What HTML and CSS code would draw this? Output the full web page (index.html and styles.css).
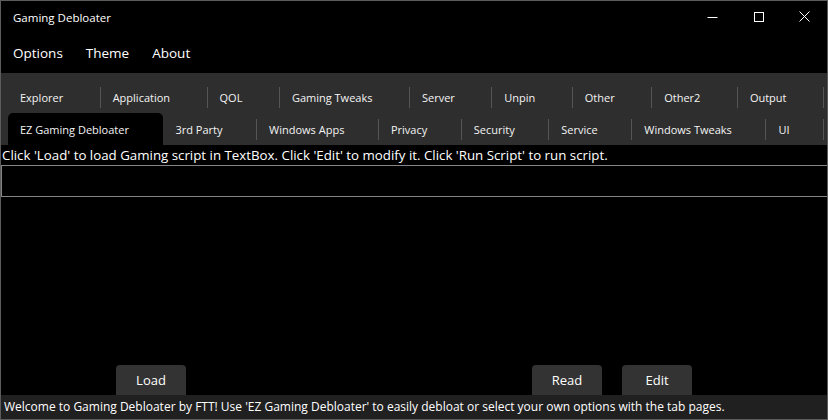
FILE: index.html
```html
<!DOCTYPE html>
<html lang="en">

<head>
  <meta charset="UTF-8">
  <title>Gaming Debloater</title>
  <link rel="stylesheet" href="styles.css">
</head>

<body>
  <div class="window">
    <div class="titlebar">
      <span class="title">Gaming Debloater</span>
      <div class="controls">
        <svg class="ctl" width="46" height="33" viewBox="0 0 46 33"><path d="M17.5 17.5h10" stroke="#fff" stroke-width="1"/></svg>
        <svg class="ctl" width="46" height="33" viewBox="0 0 46 33"><rect x="18.5" y="12.5" width="9" height="9" fill="none" stroke="#fff" stroke-width="1"/></svg>
        <svg class="ctl" width="46" height="33" viewBox="0 0 46 33"><path d="M17.5 11.5l10 10M27.5 11.5l-10 10" stroke="#fff" stroke-width="1"/></svg>
      </div>
    </div>

    <div class="menubar">
      <span class="menu-item">Options</span>
      <span class="menu-item">Theme</span>
      <span class="menu-item">About</span>
    </div>

    <div class="tabs">
      <div class="tab-row">
        <div class="tab">Explorer</div>
        <div class="tab">Application</div>
        <div class="tab">QOL</div>
        <div class="tab">Gaming Tweaks</div>
        <div class="tab">Server</div>
        <div class="tab">Unpin</div>
        <div class="tab">Other</div>
        <div class="tab">Other2</div>
        <div class="tab">Output</div>
      </div>
      <div class="tab-row">
        <div class="tab active">EZ Gaming Debloater</div>
        <div class="tab">3rd Party</div>
        <div class="tab">Windows Apps</div>
        <div class="tab">Privacy</div>
        <div class="tab">Security</div>
        <div class="tab">Service</div>
        <div class="tab">Windows Tweaks</div>
        <div class="tab">UI</div>
      </div>
    </div>

    <div class="page">
      <div class="hint">Click 'Load' to load Gaming script in TextBox. Click 'Edit' to modify it. Click 'Run Script' to run script.</div>
      <div class="textbox"></div>
      <div class="buttons">
        <button class="btn">Load</button>
        <div class="spacer"></div>
        <button class="btn">Read</button>
        <button class="btn">Edit</button>
      </div>
    </div>

    <div class="status">Welcome to Gaming Debloater by FTT! Use 'EZ Gaming Debloater' to easily debloat or select your own options with the tab pages.</div>
  </div>
</body>

</html>
```

FILE: styles.css
```css
* {
  box-sizing: border-box;
}

body {
  margin: 0;
  background-color: #000;
  font-family: "Open Sans", "Noto Sans", sans-serif;
  color: #fff;
}

.window {
  width: 828px;
  height: 420px;
  border: 1px solid #5c5c5c;
  display: flex;
  flex-direction: column;
  background-color: #000;
}

.titlebar {
  height: 32px;
  display: flex;
  align-items: center;
  justify-content: space-between;
}

.title {
  padding-left: 12px;
  font-size: 11.5px;
}

.controls {
  display: flex;
  height: 32px;
  margin-right: -1px;
}

.ctl {
  display: block;
  margin-top: -1px;
}

.menubar {
  height: 40px;
  display: flex;
  align-items: center;
  padding-left: 12px;
  padding-bottom: 1px;
  gap: 23px;
  font-size: 13.5px;
}

.tabs {
  background-color: #2e2e2e;
  padding: 7px 3px 0 7px;
  height: 72px;
}

.tab-row {
  display: flex;
  height: 33px;
}

.tab-row + .tab-row {
  height: 32px;
}

.tab {
  flex: 1 1 auto;
  display: flex;
  align-items: center;
  justify-content: space-between;
  padding-left: 12px;
  padding-top: 1px;
  font-size: 11px;
  color: #f4f4f4;
  white-space: nowrap;
}

.tab-row + .tab-row .tab {
  padding-top: 0;
}

.tab::after {
  content: "";
  width: 1px;
  height: 21px;
  margin-left: 12px;
  background-color: #555;
}

.tab.active {
  background-color: #000;
  border-radius: 5px 5px 0 0;
}

.tab.active::after {
  background-color: transparent;
}

.page {
  flex: 1;
  display: flex;
  flex-direction: column;
}

.hint {
  height: 20px;
  line-height: 20px;
  padding-left: 1px;
  font-size: 13.3px;
}

.textbox {
  height: 32px;
  border: 1px solid #858585;
  border-right: none;
  background-color: #000;
}

.buttons {
  margin-top: auto;
  display: flex;
  gap: 20px;
  padding: 0 135px 0 115px;
}

.spacer {
  flex: 1;
}

.btn {
  width: 70px;
  height: 30px;
  border: none;
  border-radius: 4px 4px 0 0;
  background-color: #333;
  color: #fff;
  font-family: inherit;
  font-size: 13px;
}

.status {
  height: 24px;
  line-height: 24px;
  padding-left: 3px;
  background-color: #202020;
  font-size: 12px;
  white-space: nowrap;
}
```
